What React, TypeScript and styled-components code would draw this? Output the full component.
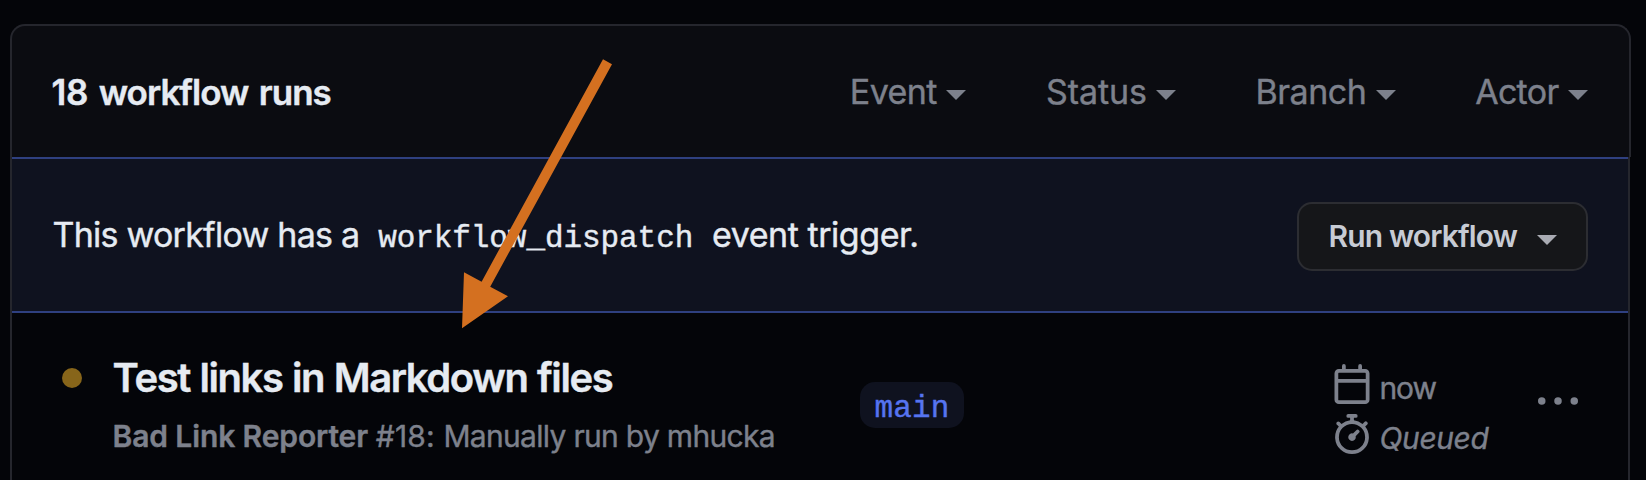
import React from "react";
import styled, { createGlobalStyle } from "styled-components";

const color = {
  canvas: "#040509",
  header: "#0b0c11",
  banner: "#0f121f",
  line: "#2f4080",
  border: "#25262d",
  text: "#e6ebf2",
  muted: "#7d818c",
  accent: "#5674f0",
  queued: "#87651a",
  arrow: "#d47020",
};

const mono = `"Liberation Mono", monospace`;

const GlobalStyle = createGlobalStyle`
  * { box-sizing: border-box; }
  html, body { margin: 0; height: 480px; overflow: hidden; background: ${color.canvas}; }
  body { font-family: Inter, "Liberation Sans", sans-serif; color: ${color.text}; }
`;

const Page = styled.main`
  position: relative;
  height: 480px;
  padding: 24px 15px 0 10px;
  overflow: hidden;
  background: ${color.canvas};
  -webkit-text-stroke: 0.4px currentColor;
`;

const Header = styled.header`
  display: flex;
  align-items: center;
  justify-content: space-between;
  height: 133px;
  padding: 0 41px 0 39.5px;
  border: 2px solid ${color.border};
  border-bottom: 0;
  border-radius: 15px 15px 0 0;
  background: ${color.header};
`;

const Count = styled.h2`
  margin: 0;
  font-size: 35px;
  font-weight: 600;
  letter-spacing: -0.98px;
  line-height: 52px;
  word-spacing: 2.6px;
`;

const CountNumber = styled.span`
  letter-spacing: -0.2px;
`;

const Filters = styled.nav`
  display: flex;
  gap: 79.6px;
`;

const Filter = styled.button<{ $tracking: number }>`
  display: flex;
  align-items: center;
  padding: 0;
  border: 0;
  background: none;
  color: ${color.muted};
  font: 400 34px/52px Inter, sans-serif;
  letter-spacing: ${(p) => p.$tracking}px;
`;

const Caret = styled.span<{ $gap: number }>`
  width: 0;
  margin: 7px 0 0 ${(p) => p.$gap}px;
  border: 10px solid transparent;
  border-top-color: currentColor;
  border-bottom: 0;
`;

const ButtonCaret = styled(Caret)`
  color: #a9abb3;
`;

const Body = styled.section`
  height: 340px;
  margin-right: 1px;
  border: solid ${color.border};
  border-width: 0 2px;
`;

const Banner = styled.div`
  display: flex;
  align-items: center;
  justify-content: space-between;
  height: 156px;
  padding: 0 40px 0 40.5px;
  border: solid ${color.line};
  border-width: 2px 0;
  background: ${color.banner};
`;

const Message = styled.p`
  margin: 0;
  font-size: 34px;
  letter-spacing: -0.754px;
  line-height: 52px;
  white-space: nowrap;
`;

const Tail = styled.span`
  letter-spacing: -0.45px;
`;

const Code = styled.code`
  padding: 0 10px 0 10px;
  font: 400 31px/1 ${mono};
  letter-spacing: -0.07px;
`;

const RunButton = styled.button`
  display: flex;
  align-items: center;
  justify-content: center;
  width: 291px;
  height: 69px;
  margin-top: 3px;
  padding: 0;
  border: 2px solid #2c2d32;
  border-radius: 15px;
  background: #151619;
  color: #c7cbd4;
  font: 600 30px/45px Inter, sans-serif;
  letter-spacing: -0.85px;
  -webkit-text-stroke: 0;
`;

const Run = styled.article`
  display: grid;
  grid-template-columns: 50.5px 747.5px 472px 206px 40px;
  align-items: start;
  padding: 40px 0 0 50px;
`;

const StatusDot = styled.span`
  width: 20px;
  height: 20px;
  margin-top: 15px;
  border-radius: 50%;
  background: ${color.queued};
`;

const Title = styled.h3`
  margin: 0;
  font-size: 40px;
  font-weight: 600;
  letter-spacing: -1.4px;
  line-height: 50px;
  white-space: nowrap;
  word-spacing: 0.8px;
`;

const Subtitle = styled.p`
  margin: 10.5px 0 0;
  color: ${color.muted};
  font-size: 30px;
  letter-spacing: -0.69px;
  line-height: 45px;
  white-space: nowrap;
`;

const WorkflowName = styled.strong`
  font-weight: 600;
  letter-spacing: -0.11px;
`;

const RunNumber = styled.span`
  letter-spacing: 0.15px;
`;

const BranchLabel = styled.span`
  justify-self: start;
  width: 104px;
  height: 46px;
  margin-top: 29px;
  padding-top: 7px;
  border-radius: 15px;
  background: ${color.banner};
  color: ${color.accent};
  font: 400 31px/39px ${mono};
  letter-spacing: 0.2px;
  text-align: center;
`;

const Meta = styled.div`
  display: grid;
  gap: 10px;
  margin-top: 11px;
  color: ${color.muted};
`;

const MetaItem = styled.div<{ $tracking: number; $italic?: boolean }>`
  display: flex;
  align-items: flex-end;
  gap: 7.5px;
  height: 40px;
  font-size: 30px;
  font-style: ${(p) => (p.$italic ? "italic" : "normal")};
  letter-spacing: ${(p) => p.$tracking}px;
  line-height: 32px;
`;

const Icon = styled.svg`
  display: block;
  flex: none;
  width: 40px;
  height: 40px;
  fill: currentColor;
  fill-rule: evenodd;
`;

const More = styled.button`
  margin: 28px 0 0;
  padding: 0;
  border: 0;
  background: none;
  color: ${color.muted};
`;

const Arrow = styled.svg`
  position: absolute;
  top: 54px;
  left: 457px;
  width: 160px;
  height: 280px;
  fill: ${color.arrow};
`;

const filters = [
  { label: "Event", tracking: -0.573, gap: 9.5 },
  { label: "Status", tracking: -0.1, gap: 9.2 },
  { label: "Branch", tracking: -0.5, gap: 9.2 },
  { label: "Actor", tracking: -0.7, gap: 9.5 },
];

export default function App() {
  return (
    <Page>
      <GlobalStyle />
      <Header>
        <Count>
          <CountNumber>18</CountNumber> workflow runs
        </Count>
        <Filters>
          {filters.map((f) => (
            <Filter key={f.label} $tracking={f.tracking}>
              {f.label}
              <Caret $gap={f.gap} />
            </Filter>
          ))}
        </Filters>
      </Header>
      <Body>
        <Banner>
          <Message>
            This workflow has a <Code>workflow_dispatch</Code> <Tail>event trigger.</Tail>
          </Message>
          <RunButton>
            Run workflow
            <ButtonCaret $gap={19.5} />
          </RunButton>
        </Banner>
        <Run>
          <StatusDot />
          <div>
            <Title>Test links in Markdown files</Title>
            <Subtitle>
              <WorkflowName>Bad Link Reporter</WorkflowName> <RunNumber>#18: </RunNumber>
              Manually run by mhucka
            </Subtitle>
          </div>
          <BranchLabel>main</BranchLabel>
          <Meta>
            <MetaItem $tracking={-1.1}>
              <Icon viewBox="0 0 16 16">
                <path d="M4.75 0a.75.75 0 01.75.75V2h5V.75a.75.75 0 011.5 0V2h1.25c.966 0 1.75.784 1.75 1.75v10.5A1.75 1.75 0 0113.25 16H2.75A1.75 1.75 0 011 14.25V3.75C1 2.784 1.784 2 2.75 2H4V.75A.75.75 0 014.75 0zm0 3.5h8.5a.25.25 0 01.25.25V6h-11V3.75a.25.25 0 01.25-.25h2zm-2.25 4v6.75c0 .138.112.25.25.25h10.5a.25.25 0 00.25-.25V7.5h-11z" />
              </Icon>
              now
            </MetaItem>
            <MetaItem $tracking={-0.4} $italic>
              <Icon viewBox="0 0 16 16">
                <path d="M5.75.75A.75.75 0 016.5 0h3a.75.75 0 010 1.5h-.75v1l-.001.041a6.718 6.718 0 013.464 1.435l.007-.006.75-.75a.75.75 0 111.06 1.06l-.75.75-.006.007a6.75 6.75 0 11-10.548 0L2.72 5.03l-.75-.75a.75.75 0 011.06-1.06l.75.75.007.006A6.718 6.718 0 017.25 2.541a.756.756 0 010-.041v-1H6.5a.75.75 0 01-.75-.75zM8 14.5A5.25 5.25 0 108 4a5.25 5.25 0 000 10.5zm.389-6.7l1.33-1.33a.75.75 0 111.061 1.06L9.45 8.861A1.502 1.502 0 018 10.75a1.5 1.5 0 11.389-2.95z" />
              </Icon>
              Queued
            </MetaItem>
          </Meta>
          <More aria-label="More options">
            <Icon viewBox="0 0 16 16">
              <circle cx="1.5" cy="8" r="1.5" />
              <circle cx="8" cy="8" r="1.5" />
              <circle cx="14.5" cy="8" r="1.5" />
            </Icon>
          </More>
        </Run>
      </Body>
      <Arrow viewBox="457 54 160 280">
        <polygon points="603,59.3 612,64.3 490.2,286.7 508,296.2 462,328.2 464,272.2 481.6,281.7" />
      </Arrow>
    </Page>
  );
}
